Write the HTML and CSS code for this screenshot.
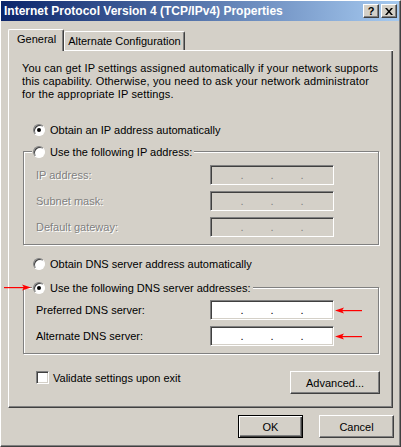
FILE: index.html
```html
<!DOCTYPE html>
<html lang="en">
<head>
    <meta charset="UTF-8">
    <title>Internet Protocol Version 4 (TCP/IPv4) Properties</title>
    <link rel="stylesheet" href="styles.css">
</head>
<body>
    <div class="window">
        <div class="titlebar">
            <span class="title">Internet Protocol Version 4 (TCP/IPv4) Properties</span>
            <div class="caption-buttons">
                <button class="cap-btn">?</button>
                <button class="cap-btn">
                    <svg width="8" height="7" viewBox="0 0 8 7"><path d="M0 0h2l2 2.5 2-2.5h2l-3 3.5 3 3.5h-2l-2-2.5-2 2.5h-2l3-3.5z" fill="#000"/></svg>
                </button>
            </div>
        </div>

        <div class="tabs">
            <div class="tab active">General</div>
            <div class="tab">Alternate Configuration</div>
        </div>

        <div class="panel">
            <p class="intro">You can get IP settings assigned automatically if your network supports<br>this capability. Otherwise, you need to ask your network administrator<br>for the appropriate IP settings.</p>

            <label class="radio-row first"><span class="radio checked"></span>Obtain an IP address automatically</label>

            <fieldset class="group disabled">
                <legend><label class="radio-row"><span class="radio"></span>Use the following IP address:</label></legend>
                <div class="field-row">
                    <span class="field-label">IP address:</span>
                    <div class="ip"><span>.</span><span>.</span><span>.</span></div>
                </div>
                <div class="field-row">
                    <span class="field-label">Subnet mask:</span>
                    <div class="ip"><span>.</span><span>.</span><span>.</span></div>
                </div>
                <div class="field-row">
                    <span class="field-label">Default gateway:</span>
                    <div class="ip"><span>.</span><span>.</span><span>.</span></div>
                </div>
            </fieldset>

            <label class="radio-row dns-auto"><span class="radio"></span>Obtain DNS server address automatically</label>

            <fieldset class="group dns">
                <legend>
                    <!-- red annotation arrows -->
                    <svg class="arrow arrow-left" width="27" height="7" viewBox="0 0 27 7"><rect x="0" y="3" width="21" height="1.2" fill="#f00"/><path d="M27 3.5 L18 0.5 L20 3.5 L18 6.5 Z" fill="#f00"/></svg>
                    <label class="radio-row"><span class="radio checked"></span>Use the following DNS server addresses:</label>
                </legend>
                <div class="field-row">
                    <span class="field-label">Preferred DNS server:</span>
                    <div class="ip"><span>.</span><span>.</span><span>.</span></div>
                    <svg class="arrow arrow-right" width="27" height="7" viewBox="0 0 27 7"><path d="M0 3.5 L9 0.5 L7 3.5 L9 6.5 Z" fill="#f00"/><rect x="6" y="3" width="21" height="1.2" fill="#f00"/></svg>
                </div>
                <div class="field-row">
                    <span class="field-label">Alternate DNS server:</span>
                    <div class="ip"><span>.</span><span>.</span><span>.</span></div>
                    <svg class="arrow arrow-right" width="27" height="7" viewBox="0 0 27 7"><path d="M0 3.5 L9 0.5 L7 3.5 L9 6.5 Z" fill="#f00"/><rect x="6" y="3" width="21" height="1.2" fill="#f00"/></svg>
                </div>
            </fieldset>

            <div class="bottom-row">
                <label class="check-row"><span class="checkbox"></span>Validate settings upon exit</label>
                <button class="btn advanced">Advanced...</button>
            </div>
        </div>

        <div class="footer">
            <button class="btn default ok">OK</button>
            <button class="btn cancel">Cancel</button>
        </div>
    </div>
</body>
</html>
```

FILE: styles.css
```css
* {
    box-sizing: border-box;
}

body {
    margin: 0;
    background: #d4d0c8;
    font-family: 'Liberation Sans', Arial, sans-serif;
    font-size: 11px;
    color: #000;
}

/* Window frame */
.window {
    width: 401px;
    height: 447px;
    border: 1px solid;
    border-color: #fff #404040 #404040 #fff;
    box-shadow: inset -1px -1px #808080;
}

.titlebar {
    height: 20px;
    margin-right: 1px;
    padding: 0 2px 0 3px;
    display: flex;
    align-items: center;
    justify-content: space-between;
    background: linear-gradient(to right, #0a246a, #a6caf0);
    color: #fff;
    font-size: 12px;
    font-weight: bold;
}

.caption-buttons {
    display: flex;
    gap: 2px;
}

.cap-btn {
    width: 16px;
    height: 14px;
    padding: 0;
    display: flex;
    align-items: center;
    justify-content: center;
    border: 1px solid;
    border-color: #fff #404040 #404040 #fff;
    box-shadow: inset -1px -1px #808080;
    background: #d4d0c8;
    font-family: 'Liberation Sans', Arial, sans-serif;
    font-size: 11px;
    font-weight: bold;
    color: #000;
}

/* Tabs */
.tabs {
    display: flex;
    align-items: flex-end;
    width: 385px;
    height: 22px;
    margin: 8px 0 0 7px;
    border-bottom: 1px solid #fff;
}

.tab {
    height: 19px;
    padding: 0 3px;
    line-height: 18px;
    border: 1px solid;
    border-bottom: none;
    border-color: #fff #404040 #404040 #fff;
    box-shadow: inset -1px 0 #808080;
    border-radius: 2px 2px 0 0;
}

.tab.active {
    height: 22px;
    margin-bottom: -1px;
    padding: 0 7px 0 8px;
    line-height: 19px;
    background: #d4d0c8;
}

/* Tab page */
.panel {
    width: 385px;
    margin-left: 7px;
    padding: 11px 12px 13px 13px;
    border: 1px solid;
    border-top: none;
    border-color: #fff #404040 #404040 #fff;
    box-shadow: inset -1px -1px #808080;
}

.intro {
    margin: 0;
    line-height: 13px;
    letter-spacing: 0.14px;
}

.radio-row {
    display: flex;
    align-items: center;
    gap: 5px;
    height: 14px;
}

.radio-row.first {
    margin-top: 22px;
    padding-left: 11px;
}

.radio-row.dns-auto {
    margin-top: 12px;
    padding-left: 11px;
}

.radio {
    width: 12px;
    height: 12px;
    flex-shrink: 0;
    display: flex;
    align-items: center;
    justify-content: center;
    border: 1px solid;
    border-color: #808080 #fff #fff #808080;
    border-radius: 50%;
    box-shadow: inset 1px 1px #404040;
    background: #fff;
}

.radio.checked::after {
    content: "";
    width: 4px;
    height: 4px;
    border-radius: 50%;
    background: #000;
}

/* Group boxes */
.group {
    width: 356px;
    min-width: 0;
    margin: 7px 0 0 1px;
    padding: 6px 0 7px;
    border: 1px solid #808080;
    box-shadow: inset 1px 1px #fff, 1px 1px #fff;
}

.group.dns {
    margin-top: 9px;
    padding-top: 5px;
}

.group legend {
    position: relative;
    margin-left: 8px;
    padding: 0 2px 0 1px;
    background: #d4d0c8;
}

.group legend .radio-row {
    height: 15px;
}

.field-row {
    position: relative;
    display: grid;
    grid-template-columns: 174px 124px;
    align-items: center;
    width: 298px;
    margin-left: 12px;
}

.field-row + .field-row {
    margin-top: 6px;
}

.ip {
    height: 20px;
    display: flex;
    justify-content: center;
    line-height: 18px;
    border: 1px solid;
    border-color: #808080 #fff #fff #808080;
    box-shadow: inset 1px 1px #404040, inset -1px -1px #d4d0c8;
    background: #fff;
}

.ip span {
    width: 30px;
    text-align: center;
}

.disabled .field-label {
    color: #808080;
    text-shadow: 1px 1px #fff;
}

.disabled .ip {
    background: #d4d0c8;
    color: #808080;
}

/* Annotation arrows */
.arrow {
    position: absolute;
}

.arrow-left {
    left: -28px;
    top: 4px;
}

.arrow-right {
    left: calc(100% + 1px);
    top: 7px;
}

/* Checkbox + Advanced */
.bottom-row {
    display: flex;
    justify-content: space-between;
    align-items: flex-start;
    margin-top: 17px;
}

.check-row {
    display: flex;
    align-items: center;
    gap: 4px;
    height: 13px;
    padding-left: 14px;
}

.checkbox {
    width: 13px;
    height: 13px;
    border: 1px solid;
    border-color: #808080 #fff #fff #808080;
    box-shadow: inset 1px 1px #404040, inset -1px -1px #d4d0c8;
    background: #fff;
}

/* Push buttons */
.btn {
    height: 23px;
    padding: 0;
    border: 1px solid;
    border-color: #fff #404040 #404040 #fff;
    box-shadow: inset -1px -1px #808080;
    background: #d4d0c8;
    font-family: 'Liberation Sans', Arial, sans-serif;
    font-size: 11px;
    color: #000;
}

.btn.default {
    border-color: #000;
    box-shadow: inset 1px 1px #fff, inset -1px -1px #404040, inset -2px -2px #808080;
}

.advanced {
    width: 90px;
}

.ok {
    width: 65px;
}

.cancel {
    width: 75px;
}

.footer {
    display: flex;
    justify-content: flex-end;
    gap: 16px;
    margin-top: 7px;
    padding-right: 6px;
}
```
